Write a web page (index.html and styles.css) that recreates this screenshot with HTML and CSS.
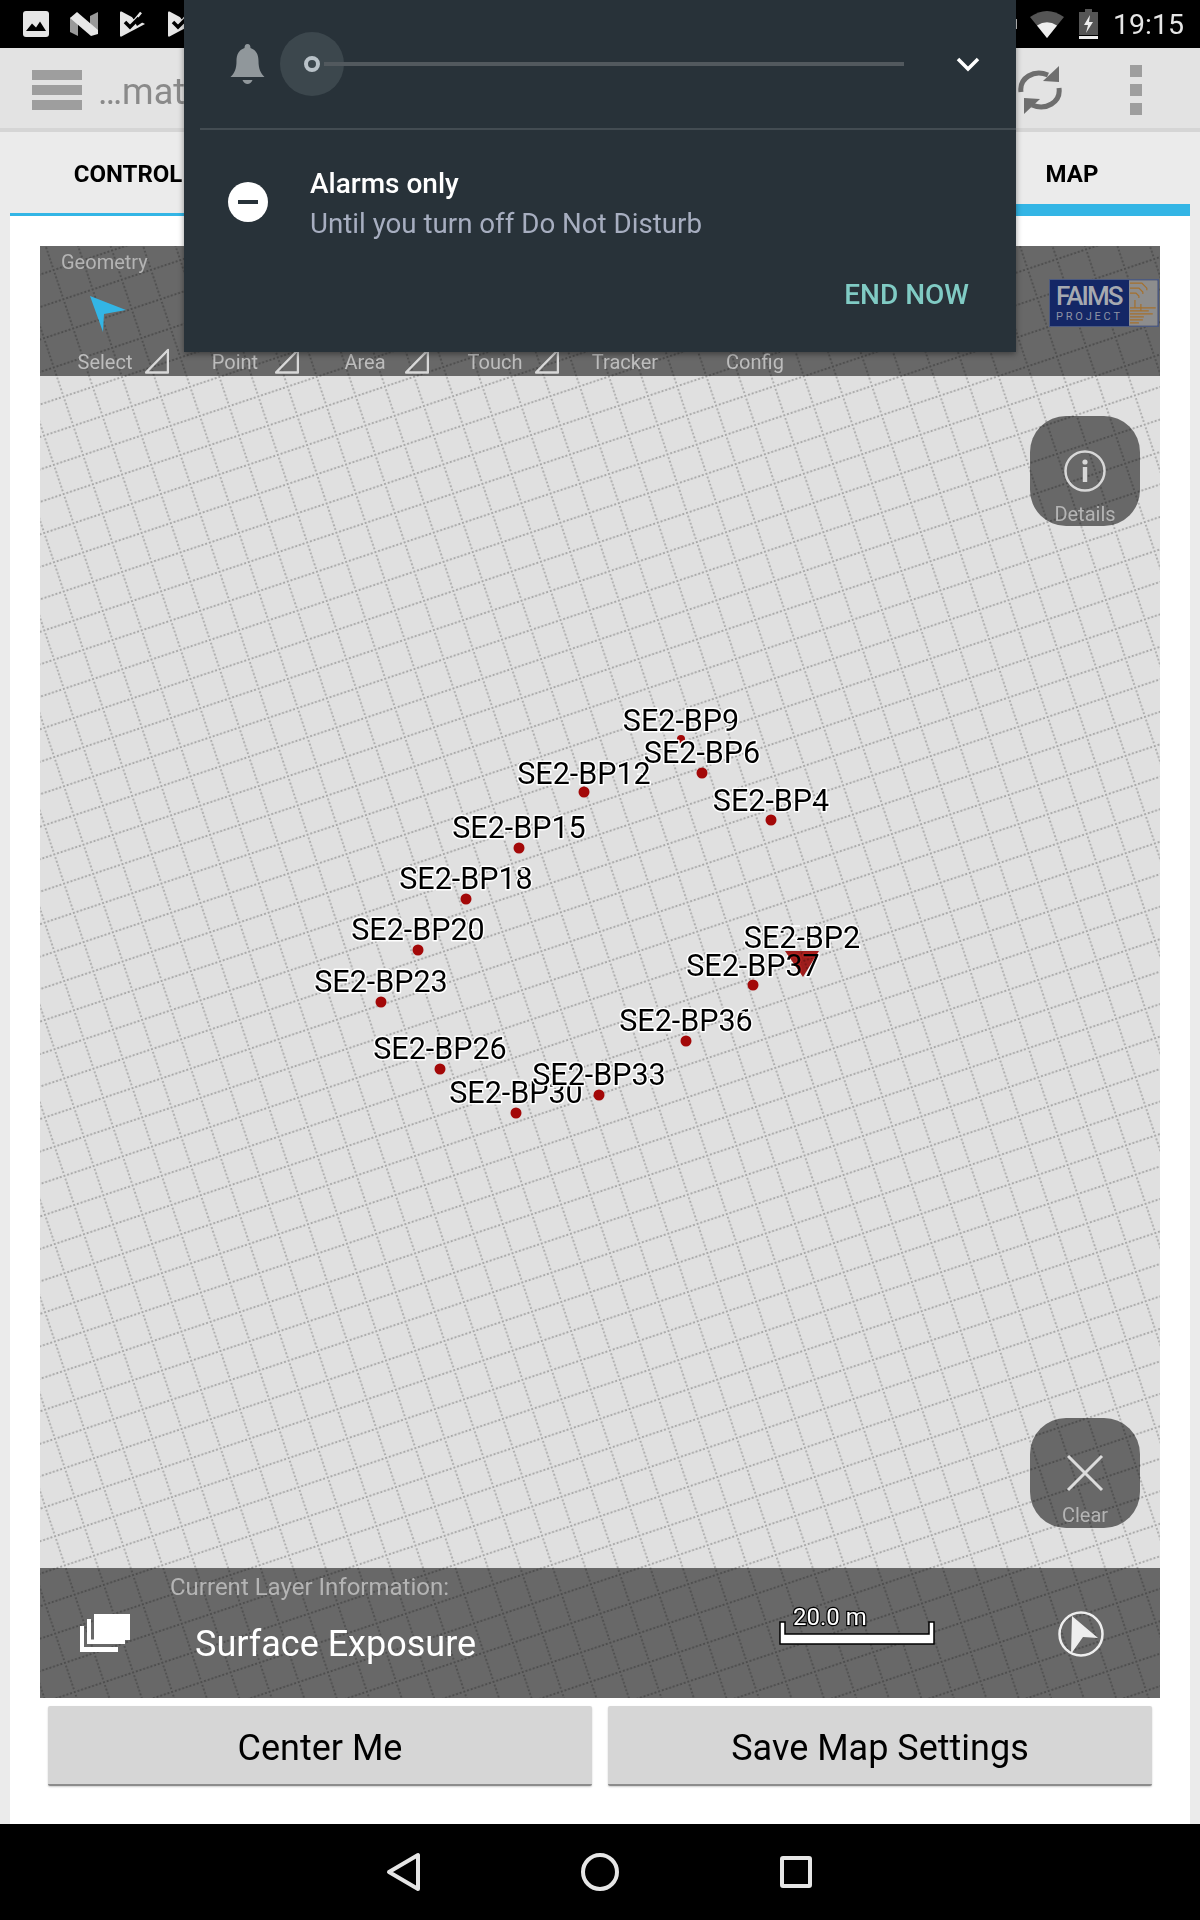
FILE: index.html
```html
<!DOCTYPE html>
<html lang="en">

<head>
    <meta charset="UTF-8">
    <title>Map</title>
    <link rel="stylesheet" href="styles.css">
</head>

<body>
    <div class="status-bar">
        <div class="status-left">
            <svg width="26" height="26" viewBox="0 0 26 26">
                <rect width="26" height="26" rx="3" fill="#e6e6e6" />
                <path d="M3 20L9 12.5L13 16.5L17 10.5L23 20Z" fill="#000" />
            </svg>
            <svg class="status-n" width="28" height="24" viewBox="0 0 28 24">
                <path d="M0 6L8 2V24L0 20Z" fill="#999" />
                <path d="M20 4L28 0V22L20 18Z" fill="#999" />
                <path d="M0 6L7 0L28 18V22L21 24Z" fill="#e6e6e6" />
            </svg>
            <svg class="status-flag" width="26" height="26" viewBox="0 0 26 26">
                <path d="M0 1.500Q0 0 1.500 0.500L25 13L1.500 25.500Q0 26 0 24.500Z" fill="#e6e6e6" />
                <path d="M9 0H26V9L17 15Z" fill="#000" />
                <path d="M11 8L14 10L21 1.500" fill="none" stroke="#e6e6e6" stroke-width="2.500" />
                <path d="M5 11L10 16L19 7" fill="none" stroke="#000" stroke-width="3.500" />
            </svg>
            <svg class="status-flag" width="26" height="26" viewBox="0 0 26 26">
                <path d="M0 1.500Q0 0 1.500 0.500L25 13L1.500 25.500Q0 26 0 24.500Z" fill="#e6e6e6" />
                <path d="M9 0H26V9L17 15Z" fill="#000" />
                <path d="M11 8L14 10L21 1.500" fill="none" stroke="#e6e6e6" stroke-width="2.500" />
                <path d="M5 11L10 16L19 7" fill="none" stroke="#000" stroke-width="3.500" />
            </svg>
        </div>
        <div class="status-right">
            <span class="status-hidden"></span>
            <svg width="34" height="28" viewBox="0 0 34 28">
                <path d="M0 7Q17 -5 34 7L17 28Z" fill="#555" />
                <path d="M7 15.500Q17 9 27 15.500L17 28Z" fill="#eee" />
            </svg>
            <svg class="status-battery" width="19" height="30" viewBox="0 0 19 30">
                <path d="M6 0H13V3H19V26H0V3H6Z" fill="#555" />
                <rect y="27" width="19" height="3" fill="#eee" />
                <path d="M11 6L5 16H9L7 24L14 13H10Z" fill="#eee" />
            </svg>
            <span class="status-time">19:15</span>
        </div>
    </div>

    <div class="action-bar">
        <div class="hamburger"><span></span><span></span><span></span></div>
        <span class="action-title">…mat</span>
        <svg class="sync-icon" width="44" height="48" viewBox="0 0 44 48">
            <path d="M3 26C1 12 16 3 30 9" fill="none" stroke="#6e6e6e" stroke-width="5" />
            <path d="M41 0L41 16L25 15Z" fill="#6e6e6e" />
            <path d="M41 22C43 36 28 45 14 39" fill="none" stroke="#6e6e6e" stroke-width="5" />
            <path d="M6 48L6 32L22 33Z" fill="#6e6e6e" />
        </svg>
        <div class="overflow-menu"><span></span><span></span><span></span></div>
    </div>

    <div class="tabs">
        <div class="tab">CONTROL</div>
        <div class="tab"></div>
        <div class="tab"></div>
        <div class="tab"></div>
        <div class="tab tab-active">MAP</div>
    </div>

    <div class="content">
        <div class="map">
            <svg class="map-canvas" viewBox="40 246 1120 1452">
                <defs>
                    <pattern id="grid" width="30.8" height="30.8" patternUnits="userSpaceOnUse"
                        patternTransform="translate(62.3 396) rotate(-18.5)">
                        <path d="M0 1H30.8M1 0V30.8" stroke="#a6a6a6" stroke-width="1.8" stroke-dasharray="1.9 1.95" fill="none" />
                    </pattern>
                </defs>
                <rect x="40" y="246" width="1120" height="1452" fill="#e0e0e0" />
                <rect x="40" y="246" width="1120" height="1452" fill="url(#grid)" />

                <g class="pin-dots">
                    <circle cx="681" cy="739" r="4" />
                    <circle cx="702" cy="773" r="5.500" />
                    <circle cx="584" cy="792" r="5.500" />
                    <circle cx="771" cy="820" r="5.500" />
                    <circle cx="519" cy="848" r="5.500" />
                    <circle cx="466" cy="899" r="5.500" />
                    <circle cx="418" cy="950" r="5.500" />
                    <circle cx="381" cy="1002" r="5.500" />
                    <circle cx="440" cy="1069" r="5.500" />
                    <circle cx="516" cy="1113" r="5.500" />
                    <circle cx="599" cy="1095" r="5.500" />
                    <circle cx="686" cy="1041" r="5.500" />
                    <circle cx="753" cy="985" r="5.500" />
                </g>
                <g class="pin-labels">
                    <text x="681" y="731">SE2-BP9</text>
                    <text x="702" y="763">SE2-BP6</text>
                    <text x="584" y="784">SE2-BP12</text>
                    <text x="771" y="811">SE2-BP4</text>
                    <text x="519" y="838">SE2-BP15</text>
                    <text x="466" y="889">SE2-BP18</text>
                    <text x="418" y="940">SE2-BP20</text>
                    <text x="381" y="992">SE2-BP23</text>
                    <text x="440" y="1059">SE2-BP26</text>
                    <text x="516" y="1103">SE2-BP30</text>
                    <text x="599" y="1085">SE2-BP33</text>
                    <text x="686" y="1031">SE2-BP36</text>
                    <text x="802" y="948">SE2-BP2</text>
                    <text x="753" y="976">SE2-BP37</text>
                </g>
                <path class="pin-start" d="M785 951H819L803 977Z" />
                <!-- white flecks where hidden labels poke through -->
                <path class="pin-flecks" d="M572 828h7M519 869h6M519 880h6M739 1012h6M739 1023h6M471 930h6M434 982h6M493 1049h6M652 1075h6M637 774h6M727 721h5M815 801h5M748 753h5M776 930h9M792 926h8M792 938h6M808 926h6M808 938h6" />
            </svg>

            <div class="map-top">
                <div class="geometry">
                    <div class="geometry-title">Geometry</div>
                    <svg class="geometry-arrow" width="36" height="36" viewBox="0 0 36 36">
                        <path d="M0 0L36 14L14 18L13 36Z" fill="#33b5e5" />
                    </svg>
                    <div class="tools">
                        <div class="tool">Select<svg class="tool-corner" width="24" height="26" viewBox="0 0 24 26"><path d="M23 2V24.500H1Z" fill="none" stroke="#d8d8d8" stroke-width="2.500" stroke-linejoin="round" /></svg></div>
                        <div class="tool">Point<svg class="tool-corner" width="24" height="26" viewBox="0 0 24 26"><path d="M23 2V24.500H1Z" fill="none" stroke="#d8d8d8" stroke-width="2.500" stroke-linejoin="round" /></svg></div>
                        <div class="tool">Area<svg class="tool-corner" width="24" height="26" viewBox="0 0 24 26"><path d="M23 2V24.500H1Z" fill="none" stroke="#d8d8d8" stroke-width="2.500" stroke-linejoin="round" /></svg></div>
                        <div class="tool">Touch<svg class="tool-corner" width="24" height="26" viewBox="0 0 24 26"><path d="M23 2V24.500H1Z" fill="none" stroke="#d8d8d8" stroke-width="2.500" stroke-linejoin="round" /></svg></div>
                        <div class="tool">Tracker</div>
                        <div class="tool">Config</div>
                    </div>
                </div>
                <div class="logo">
                    <div class="logo-text">
                        <span class="logo-faims">FAIMS</span>
                        <span class="logo-project">PROJECT</span>
                    </div>
                    <svg class="logo-circuit" width="29" height="46" viewBox="0 0 29 46">
                        <rect width="29" height="46" fill="#8d8d8d" />
                        <path d="M1 3H13L18 8V10M1 8H10L14 12V14M1 13H7L10 16V18M6 20V28M1 28H27M1 31H20M1 34H24M1 37H15M1 40H14M1 43H10M12 24V31" fill="none" stroke="#a5702c" stroke-width="1.200" />
                    </svg>
                </div>
            </div>

            <div class="map-btn map-btn-details">
                <svg width="42" height="42" viewBox="0 0 42 42">
                    <circle cx="21" cy="21" r="19.500" fill="none" stroke="#d8d8d8" stroke-width="2.500" />
                    <rect x="18.800" y="17" width="4.400" height="15" fill="#d8d8d8" />
                    <circle cx="21" cy="12" r="2.600" fill="#d8d8d8" />
                </svg>
                <span>Details</span>
            </div>
            <div class="map-btn map-btn-clear">
                <svg width="38" height="38" viewBox="0 0 38 38">
                    <path d="M2 2L36 36M36 2L2 36" fill="none" stroke="#dcdcdc" stroke-width="3" />
                </svg>
                <span>Clear</span>
            </div>

            <div class="map-bottom">
                <svg class="layers-icon" width="50" height="38" viewBox="0 0 50 38">
                    <rect x="14" y="0" width="36" height="26" fill="#fff" />
                    <path d="M7 5H11V25.500H45V30H7Z" fill="#fff" />
                    <path d="M0 12H4V33H38V38H0Z" fill="#fff" />
                </svg>
                <div class="layer-info">
                    <div class="layer-title">Current Layer Information:</div>
                    <div class="layer-name">Surface Exposure</div>
                </div>
                <svg class="scale-bar" width="160" height="54" viewBox="0 -14 160 54">
                    <path d="M3 16H8V28H152V16H157V38H3Z" fill="#fff" stroke="#000" stroke-width="1.500" />
                    <text x="16" y="19">20.0 m</text>
                </svg>
                <svg class="compass" width="48" height="48" viewBox="0 0 48 48">
                    <circle cx="24" cy="24" r="21.500" fill="none" stroke="#eee" stroke-width="2.500" />
                    <path d="M15 6L41 28L26 27L14 44Z" fill="#eee" />
                </svg>
            </div>
        </div>

        <div class="buttons">
            <button type="button">Center Me</button>
            <button type="button">Save Map Settings</button>
        </div>
    </div>

    <div class="nav-bar">
        <svg width="36" height="40" viewBox="0 0 36 40">
            <path d="M32 3V37L3 20Z" fill="none" stroke="#e6e6e6" stroke-width="4" stroke-linejoin="round" />
        </svg>
        <svg width="40" height="40" viewBox="0 0 40 40">
            <circle cx="20" cy="20" r="17" fill="none" stroke="#e6e6e6" stroke-width="4" />
        </svg>
        <svg width="36" height="36" viewBox="0 0 36 36">
            <rect x="4" y="4" width="28" height="28" rx="1" fill="none" stroke="#e6e6e6" stroke-width="4" />
        </svg>
    </div>

    <div class="dnd-panel">
        <div class="volume-row">
            <svg class="bell" width="37" height="40" viewBox="0 0 36 40">
                <path d="M18 0C20 0 21 1.500 21 4C27 6 29 11 29 17C29 25 31 29 35 33H1C5 29 7 25 7 17C7 11 9 6 15 4C15 1.500 16 0 18 0Z" fill="#90979b" />
                <path d="M13 36H23C22 38.500 20 40 18 40C16 40 14 38.500 13 36Z" fill="#90979b" />
            </svg>
            <div class="slider-thumb"><span></span></div>
            <div class="slider-track"></div>
            <svg class="chevron" width="24" height="16" viewBox="0 0 24 16">
                <path d="M2 3L12 13L22 3" fill="none" stroke="#fff" stroke-width="3.500" />
            </svg>
        </div>
        <div class="alarm-row">
            <div class="minus-icon"><span></span></div>
            <div>
                <div class="alarm-title">Alarms only</div>
                <div class="alarm-sub">Until you turn off Do Not Disturb</div>
            </div>
        </div>
        <div class="end-now">END NOW</div>
    </div>
</body>

</html>
```

FILE: styles.css
```css
* {
    box-sizing: border-box;
}

html,
body {
    margin: 0;
    padding: 0;
}

body {
    position: relative;
    width: 1200px;
    height: 1920px;
    overflow: hidden;
    display: flex;
    flex-direction: column;
    font-family: Roboto, sans-serif;
    background-color: #ebebeb;
}

svg {
    display: block;
}

/* status bar */
.status-bar {
    height: 48px;
    background-color: #000;
    display: flex;
    align-items: center;
    justify-content: space-between;
    padding: 0 16px 0 23px;
}

.status-left,
.status-right {
    display: flex;
    align-items: center;
}

.status-n {
    margin-left: 21px;
}

.status-flag {
    margin-left: 22px;
}

.status-hidden {
    width: 2px;
    height: 10px;
    margin-right: 13px;
    background-color: #ccc;
}

.status-battery {
    margin-left: 15px;
}

.status-time {
    margin-left: 15px;
    font-size: 28.500px;
    color: #e6e6e6;
}

/* action bar */
.action-bar {
    height: 84px;
    padding: 4px 58px 0 32px;
    background-color: #e3e3e3;
    border-bottom: 4px solid #d5d5d5;
    display: flex;
    align-items: center;
}

.hamburger {
    width: 50px;
    display: flex;
    flex-direction: column;
    gap: 5px;
}

.hamburger span {
    height: 10px;
    background-color: #9e9e9e;
}

.action-title {
    margin: 4px 0 0 16px;
    font-size: 36px;
    color: #8a8a8a;
}

.sync-icon {
    margin-left: auto;
}

.overflow-menu {
    margin-left: 68px;
    width: 12px;
    display: flex;
    flex-direction: column;
    gap: 7px;
}

.overflow-menu span {
    height: 12px;
    background-color: #9e9e9e;
}

/* tabs */
.tabs {
    height: 84px;
    margin: 0 10px;
    display: grid;
    grid-template-columns: repeat(5, 1fr);
    background-color: #ebebeb;
}

.tab {
    display: flex;
    align-items: center;
    justify-content: center;
    padding-top: 3px;
    font-size: 24px;
    font-weight: 700;
    color: #000;
    border-bottom: 3px solid #33b5e5;
}

.tab-active {
    border-bottom: 12px solid #33b5e5;
    padding-top: 12px;
}

/* main content */
.content {
    flex: 1;
    margin: 0 10px;
    padding: 30px 30px 0;
    background-color: #fff;
}

.map {
    position: relative;
    height: 1452px;
    display: flex;
    flex-direction: column;
    justify-content: space-between;
}

.map-canvas {
    position: absolute;
    top: 0;
    left: 0;
    width: 1120px;
    height: 1452px;
}

.pin-dots {
    fill: #a30808;
}

.pin-start {
    fill: #b3211f;
    mix-blend-mode: multiply;
}

.pin-labels text {
    font-family: Roboto, sans-serif;
    font-size: 30.500px;
    text-anchor: middle;
    fill: #000;
    stroke: #fff;
    stroke-width: 3px;
    paint-order: stroke fill;
    stroke-linejoin: round;
}

.pin-flecks {
    fill: none;
    stroke: #fff;
    stroke-width: 1.500px;
}

.map-top,
.map-bottom {
    position: relative;
    height: 130px;
    background-color: rgba(0, 0, 0, 0.536);
    display: flex;
}

.geometry {
    flex: 1;
    position: relative;
}

.geometry-title {
    margin: 4px 0 0 21px;
    font-size: 20px;
    line-height: 24px;
    color: #b4b4b4;
}

.geometry-arrow {
    margin: 22px 0 0 50px;
}

.tools {
    position: absolute;
    left: 0;
    bottom: 0;
    display: grid;
    grid-template-columns: repeat(6, 130px);
}

.tool {
    position: relative;
    height: 26px;
    line-height: 24px;
    text-align: center;
    font-size: 20px;
    color: #bdbdbd;
}

.tool-corner {
    position: absolute;
    right: 1px;
    top: -2px;
}

.logo {
    margin: 33px 1px 0 0;
    width: 110px;
    height: 48px;
    display: flex;
    background-color: #142766;
    border: 1px solid #4c5a80;
}

.logo-text {
    width: 80px;
    padding: 3px 0 0 6px;
    display: flex;
    flex-direction: column;
    color: #a6a9b0;
}

.logo-faims {
    font-size: 26px;
    font-weight: 500;
    line-height: 27px;
    letter-spacing: -1.900px;
}

.logo-project {
    font-size: 11px;
    line-height: 13px;
    letter-spacing: 2.800px;
    color: #8e93a5;
}

.map-btn {
    position: absolute;
    right: 20px;
    width: 110px;
    height: 110px;
    border-radius: 36px;
    background-color: rgba(0, 0, 0, 0.536);
    display: flex;
    flex-direction: column;
    align-items: center;
    font-size: 20px;
    color: #b4b4b4;
}

.map-btn-details {
    top: 170px;
    padding-top: 34px;
}

.map-btn-details span {
    margin-top: 10px;
}

.map-btn-clear {
    top: 1172px;
    padding-top: 36px;
}

.map-btn-clear span {
    margin-top: 11px;
}

.map-bottom {
    align-items: flex-start;
}

.layers-icon {
    margin: 46px 0 0 40px;
}

.layer-info {
    margin-left: 40px;
    width: 560px;
}

.layer-title {
    margin-top: 5px;
    font-size: 24px;
    line-height: 28px;
    color: #b4b4b4;
}

.layer-name {
    margin: 21px 0 0 25px;
    font-size: 36px;
    line-height: 44px;
    color: #fff;
}

.scale-bar {
    margin: 24px 0 0 47px;
}

.scale-bar text {
    font-family: Roboto, sans-serif;
    font-size: 24px;
    fill: #fff;
    stroke: #000;
    stroke-width: 2.500px;
    paint-order: stroke fill;
}

.compass {
    margin: 42px 0 0 120px;
}

.buttons {
    display: flex;
    gap: 16px;
    padding: 8px 8px 0;
}

.buttons button {
    flex: 1;
    height: 80px;
    padding-top: 7px;
    border: none;
    border-bottom: 2px solid #8c8c8c;
    border-radius: 2px;
    background-color: #d6d6d6;
    box-shadow: 0px 1px 2px rgba(0, 0, 0, 0.2);
    font-family: Roboto, sans-serif;
    font-size: 36px;
    color: #000;
}

/* nav bar */
.nav-bar {
    height: 96px;
    background-color: #000;
    display: flex;
    align-items: center;
    justify-content: center;
    gap: 158px;
}

/* do not disturb panel, pulled over the page */
.dnd-panel {
    position: absolute;
    top: 0;
    left: 184px;
    width: 832px;
    height: 352px;
    background-color: #283239;
    box-shadow: 0px 2px 6px rgba(0, 0, 0, 0.4);
}

.volume-row {
    height: 130px;
    margin-left: 16px;
    padding: 0 36px 0 29px;
    border-bottom: 2px solid #434c52;
    display: flex;
    align-items: center;
}

.bell {
    margin-right: 14px;
}

.slider-thumb {
    width: 64px;
    height: 64px;
    border-radius: 50%;
    background-color: #3c474d;
    display: flex;
    align-items: center;
    justify-content: center;
}

.slider-thumb span {
    width: 16px;
    height: 16px;
    border-radius: 50%;
    border: 4px solid #b9c2c8;
}

.slider-track {
    width: 580px;
    height: 4px;
    margin-left: -20px;
    background-color: #52595e;
}

.chevron {
    margin-left: auto;
}

.alarm-row {
    display: flex;
    align-items: center;
    padding: 34px 0 0 44px;
}

.minus-icon {
    width: 40px;
    height: 40px;
    margin: 0 42px 5px 0;
    border-radius: 50%;
    background-color: #fff;
    display: flex;
    align-items: center;
    justify-content: center;
}

.minus-icon span {
    width: 20px;
    height: 4px;
    background-color: #283239;
}

.alarm-title {
    font-size: 28px;
    font-weight: 500;
    line-height: 40px;
    color: #fff;
}

.alarm-sub {
    font-size: 27.700px;
    line-height: 40px;
    color: #a7aec0;
}

.end-now {
    margin: 34px 47px 0 0;
    text-align: right;
    font-size: 28px;
    font-weight: 500;
    line-height: 34px;
    color: #80cbc4;
}
```
